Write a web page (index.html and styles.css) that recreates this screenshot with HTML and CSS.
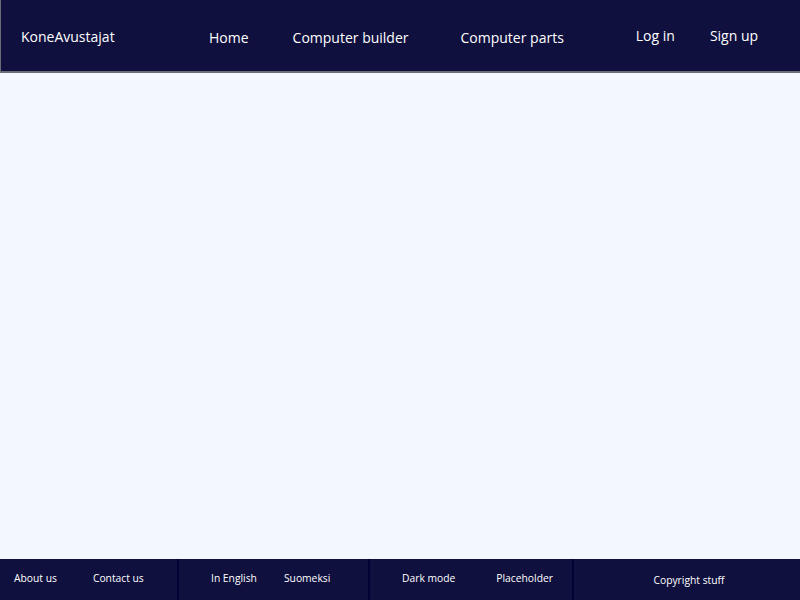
FILE: index.html
```html
<!DOCTYPE html>
<html lang="en">
<head>
<meta charset="utf-8">
<title>KoneAvustajat</title>
<link rel="stylesheet" href="styles.css">
</head>
<body>
<div class="page">
  <header class="topbar">
    <div class="logo">KoneAvustajat</div>
    <nav class="nav">
      <a class="nav-link home">Home</a>
      <a class="nav-link builder">Computer builder</a>
      <a class="nav-link parts">Computer parts</a>
    </nav>
    <div class="auth">
      <a class="auth-link">Log in</a>
      <a class="auth-link signup">Sign up</a>
    </div>
  </header>
  <main class="content"></main>
  <footer class="footer">
    <div class="fsec sec1">
      <span class="flink">About us</span>
      <span class="flink">Contact us</span>
    </div>
    <div class="fsec sec2">
      <span class="flink">In English</span>
      <span class="flink">Suomeksi</span>
    </div>
    <div class="fsec sec3">
      <span class="flink">Dark mode</span>
      <span class="flink">Placeholder</span>
    </div>
    <div class="fsec sec4">
      <span class="flink copy">Copyright stuff</span>
    </div>
  </footer>
</div>
</body>
</html>
```
FILE: styles.css
```css
* { box-sizing: border-box; }
html, body { margin: 0; padding: 0; }
body {
  font-family: "Open Sans", "Noto Sans", sans-serif;
  background: #f3f7fe;
  color: #ffffff;
}
.page {
  width: 800px;
  height: 600px;
  display: flex;
  flex-direction: column;
}
.topbar {
  height: 73px;
  background: #10103e;
  border-left: 1px solid #6b6b78;
  border-bottom: 2px solid #6b6b78;
  display: flex;
  align-items: center;
  font-size: 14px;
}
.logo {
  padding-left: 20px;
  margin-top: 1px;
  width: 208px;
}
.nav {
  display: flex;
  align-items: center;
  margin-top: 3px;
}
.nav-link { color: #fff; }
.builder { margin-left: 44px; }
.parts { margin-left: 52px; }
.auth {
  display: flex;
  margin-left: 72px;
  margin-top: -1px;
}
.signup { margin-left: 35px; }
.content { flex: 1; background: #f3f7fe; }
.footer {
  height: 41px;
  background: #10103e;
  display: flex;
  font-size: 10.3px;
}
.fsec {
  display: flex;
  align-items: center;
  border-right: 2px solid #020236;
  padding-bottom: 3px;
}
.sec1 { width: 179px; padding-left: 14px; gap: 36px; }
.sec2 { width: 191px; padding-left: 32px; gap: 27px; }
.sec3 { width: 204px; padding-left: 32px; gap: 41px; }
.sec4 { flex: 1; border-right: none; justify-content: center; padding-bottom: 0; padding-top: 1px; padding-left: 4px; }
```
